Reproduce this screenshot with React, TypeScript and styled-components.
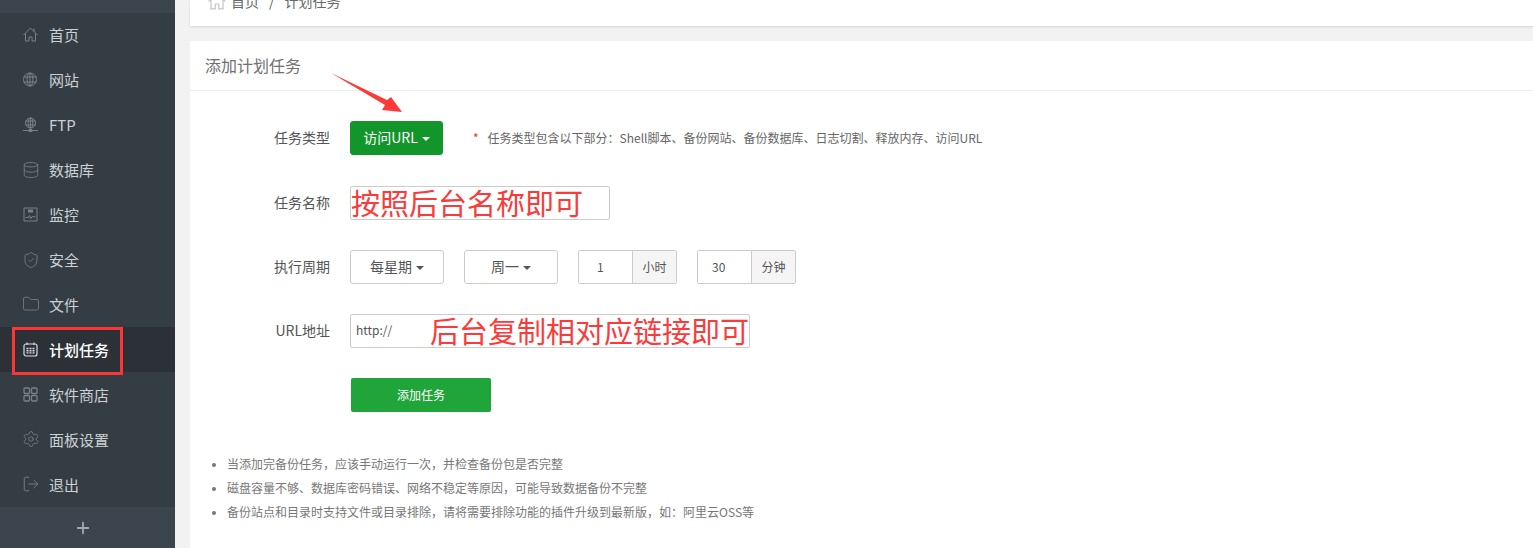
import React from 'react';
import styled, { createGlobalStyle } from 'styled-components';
import { Database, Folder, LogOut, Plus, Settings, ShieldCheck } from 'lucide-react';

const GlobalStyle = createGlobalStyle`
  html, body {
    margin: 0;
    padding: 0;
    background: #f0f0f0;
    font-family: "Noto Sans CJK SC", "Liberation Sans", sans-serif;
  }
`;

const Page = styled.div`
  position: relative;
  display: flex;
  width: 1533px;
  height: 548px;
  overflow: hidden;
`;

const Sidebar = styled.aside`
  display: flex;
  flex-direction: column;
  flex: 0 0 175px;
  background: #353d44;
`;

const SideTop = styled.div`
  height: 13px;
  background: #3c444d;
`;

const MenuItem = styled.div<{ $active?: boolean }>`
  display: flex;
  align-items: center;
  gap: 11px;
  box-sizing: border-box;
  height: 45px;
  padding: 0 0 1px 23px;
  font-size: 15px;
  color: ${(p) => (p.$active ? '#ffffff' : '#ccd0d3')};
  font-weight: ${(p) => (p.$active ? 500 : 400)};
  background: ${(p) => (p.$active ? '#2c3138' : 'transparent')};

  svg {
    flex: 0 0 15px;
    width: 15px;
    height: 15px;
    color: ${(p) => (p.$active ? '#d9dbdd' : '#7b8186')};
  }

  svg.lucide {
    flex: 0 0 18px;
    width: 18px;
    height: 18px;
    margin: 0 -1.5px;
  }
`;

const SideAdd = styled.div`
  display: flex;
  align-items: center;
  justify-content: center;
  height: 41px;
  margin-top: auto;
  padding-right: 10px;
  background: #3c444d;
  color: #a4a9ad;
`;

const Main = styled.main`
  flex: 1;
  padding-left: 15px;
  background: #f2f2f2;
`;

const Crumbs = styled.div`
  display: flex;
  align-items: center;
  gap: 10px;
  height: 26px;
  padding-left: 18px;
  overflow: hidden;
  background: #fff;
  box-shadow: 0 1px 2px rgba(0, 0, 0, 0.12);
  font-size: 14px;
  line-height: 20px;
  color: #666;

  > * {
    position: relative;
    top: -12px;
  }
`;

const CrumbHome = styled.span`
  display: flex;
  margin-right: -5px;
  color: #c4c4c4;

  svg {
    width: 18px;
    height: 18px;
  }
`;

const Card = styled.section`
  height: 507px;
  margin-top: 15px;
  background: #fff;
`;

const CardTitle = styled.h2`
  height: 49px;
  margin: 0;
  padding-left: 15px;
  border-bottom: 1px solid #eeeeee;
  box-sizing: content-box;
  font-size: 16px;
  font-weight: 400;
  line-height: 48px;
  color: #707070;
`;

const Form = styled.div`
  display: flex;
  flex-direction: column;
  gap: 30px;
  padding-top: 30px;
`;

const Row = styled.div`
  display: flex;
  align-items: center;
  height: 34px;

  &:first-child {
    margin-bottom: 1px;
  }
`;

const Label = styled.label`
  flex: 0 0 140px;
  margin-right: 20px;
  padding-bottom: 2px;
  text-align: right;
  font-size: 14px;
  color: #555;
`;

const Controls = styled.div`
  display: flex;
  gap: 20px;
`;

const Caret = styled.i`
  display: inline-block;
  margin-left: 4px;
  border-top: 4px solid currentColor;
  border-left: 4px solid transparent;
  border-right: 4px solid transparent;
  vertical-align: middle;
`;

const GreenSelect = styled.button`
  width: 93px;
  height: 34px;
  padding: 0 0 2px;
  border: 1px solid #12962c;
  border-radius: 3px;
  background: #12962c;
  color: #fff;
  font: inherit;
  font-size: 14px;
`;

const Hint = styled.span`
  margin-left: 30px;
  padding-bottom: 2px;
  font-size: 12px;
  color: #666;
`;

const Star = styled.span`
  margin-right: 9px;
  color: #e33;
`;

const TextBox = styled.div<{ $width: number }>`
  position: relative;
  box-sizing: border-box;
  width: ${(p) => p.$width}px;
  height: 34px;
  padding-left: 5px;
  border: 1px solid #ccc;
  border-radius: 2px;
  background: #fff;
  font-size: 12px;
  line-height: 30px;
  color: #555;
`;

const Annotation = styled.span<{ $left: number }>`
  position: absolute;
  top: -3px;
  left: ${(p) => p.$left}px;
  font-size: 29px;
  line-height: 36px;
  white-space: nowrap;
  color: #fb3a3a;
`;

const SelectButton = styled.button`
  box-sizing: border-box;
  width: 94px;
  height: 34px;
  padding: 0 0 2px;
  border: 1px solid #ccc;
  border-radius: 3px;
  background: #fff;
  font: inherit;
  font-size: 14px;
  color: #555;
`;

const Group = styled.div`
  display: flex;
  box-sizing: border-box;
  width: 99px;
  height: 34px;
  border: 1px solid #ccc;
  border-radius: 2px;
  font-size: 12px;
  line-height: 31px;
  color: #555;
`;

const GroupValue = styled.span<{ $pad: number }>`
  flex: 0 0 53px;
  padding-left: ${(p) => p.$pad}px;
  box-sizing: border-box;
  background: #fff;
`;

const GroupUnit = styled.span`
  flex: 1;
  border-left: 1px solid #ccc;
  background: #f5f5f5;
  text-align: center;
`;

const SubmitRow = styled.div`
  padding-left: 161px;
`;

const Submit = styled.button`
  width: 140px;
  height: 34px;
  padding: 0 0 2px;
  border: 0;
  border-radius: 2px;
  background: #20a53a;
  color: #fff;
  font: inherit;
  font-size: 12px;
`;

const Notes = styled.ul`
  margin: 40px 0 0;
  padding-left: 37px;
  font-size: 12px;
  line-height: 24px;
  color: #777;

  li::marker {
    font-size: 11px;
  }
`;

const RedFrame = styled.div`
  position: absolute;
  left: 12px;
  top: 327px;
  width: 111px;
  height: 48px;
  box-sizing: border-box;
  border: 3px solid #fc3535;
`;

const ArrowMark = styled.svg`
  position: absolute;
  left: 0;
  top: 0;
`;

const HomeIcon = () => (
  <svg viewBox="0 0 15 15" fill="none" stroke="currentColor" strokeWidth="1">
    <path d="M.5 8 7.5 1l7 7" />
    <path d="M2.5 6.5V14H6v-4h3v4h3.5V6.5" />
    <path d="M11 1.5v3" />
  </svg>
);

const GlobeIcon = () => (
  <svg viewBox="0 0 15 15" fill="none" stroke="currentColor" strokeWidth="1">
    <circle cx="7" cy="7.5" r="6.5" />
    <ellipse cx="7" cy="7.5" rx="3" ry="6.5" />
    <path d="M.5 5h13M.5 10h13M7 1v13" />
  </svg>
);

const FtpIcon = () => (
  <svg viewBox="0 0 15 15" fill="none" stroke="currentColor" strokeWidth="1">
    <circle cx="7.5" cy="6" r="5" />
    <ellipse cx="7.5" cy="6" rx="2.3" ry="5" />
    <path d="M2.5 4h10M2.5 8h10M7.5 1v10M0 13.5h15" />
    <path d="M6 12.5h3v2H6z" fill="currentColor" />
  </svg>
);

const MonitorIcon = () => (
  <svg viewBox="0 0 15 15" fill="none" stroke="currentColor" strokeWidth="1">
    <path d="M1 1h13v13H1z" />
    <path d="M5 2.5h5v3H5z" fill="currentColor" stroke="none" />
    <path d="M2.5 10.5h3l1-2 1.3 3.2 1.2-2h3.5" />
  </svg>
);

const CalendarIcon = () => (
  <svg viewBox="0 0 15 15" fill="none" stroke="currentColor" strokeWidth="1.2">
    <rect x="1" y="2" width="13" height="12" rx="2" />
    <path d="M4 .5v2.5M11 .5v2.5" />
    <path d="M3.5 6.5h8M3.5 8.7h8M3.5 10.9h8" strokeWidth="1.4" strokeDasharray="2 1" />
  </svg>
);

const GridIcon = () => (
  <svg viewBox="0 0 15 15" fill="none" stroke="currentColor" strokeWidth="1.3">
    <rect x="1" y="1" width="5.5" height="5.5" rx="1" />
    <rect x="8.5" y="1" width="5.5" height="5.5" rx="1" />
    <rect x="1" y="8.5" width="5.5" height="5.5" rx="1" />
    <rect x="8.5" y="8.5" width="5.5" height="5.5" rx="1" />
  </svg>
);

const menu: { label: string; icon: React.ReactNode; active?: boolean }[] = [
  { label: '首页', icon: <HomeIcon /> },
  { label: '网站', icon: <GlobeIcon /> },
  { label: 'FTP', icon: <FtpIcon /> },
  { label: '数据库', icon: <Database strokeWidth={1.1} /> },
  { label: '监控', icon: <MonitorIcon /> },
  { label: '安全', icon: <ShieldCheck strokeWidth={1.1} /> },
  { label: '文件', icon: <Folder strokeWidth={1.1} /> },
  { label: '计划任务', icon: <CalendarIcon />, active: true },
  { label: '软件商店', icon: <GridIcon /> },
  { label: '面板设置', icon: <Settings strokeWidth={1.1} /> },
  { label: '退出', icon: <LogOut strokeWidth={1.2} /> },
];

export default function App() {
  return (
    <Page>
      <GlobalStyle />
      <Sidebar>
        <SideTop />
        {menu.map((item) => (
          <MenuItem key={item.label} $active={item.active}>
            {item.icon}
            {item.label}
          </MenuItem>
        ))}
        <SideAdd>
          <Plus size={18} strokeWidth={2.4} />
        </SideAdd>
      </Sidebar>

      <Main>
        <Crumbs>
          <CrumbHome>
            <HomeIcon />
          </CrumbHome>
          <span>首页</span>
          <span>/</span>
          <span>计划任务</span>
        </Crumbs>

        <Card>
          <CardTitle>添加计划任务</CardTitle>
          <Form>
            <Row>
              <Label>任务类型</Label>
              <GreenSelect>
                访问URL
                <Caret />
              </GreenSelect>
              <Hint>
                <Star>*</Star>
                任务类型包含以下部分：Shell脚本、备份网站、备份数据库、日志切割、释放内存、访问URL
              </Hint>
            </Row>
            <Row>
              <Label>任务名称</Label>
              <TextBox $width={260}>
                <Annotation $left={0}>按照后台名称即可</Annotation>
              </TextBox>
            </Row>
            <Row>
              <Label>执行周期</Label>
              <Controls>
                <SelectButton>
                  每星期
                  <Caret />
                </SelectButton>
                <SelectButton>
                  周一
                  <Caret />
                </SelectButton>
                <Group>
                  <GroupValue $pad={18}>1</GroupValue>
                  <GroupUnit>小时</GroupUnit>
                </Group>
                <Group>
                  <GroupValue $pad={14}>30</GroupValue>
                  <GroupUnit>分钟</GroupUnit>
                </Group>
              </Controls>
            </Row>
            <Row>
              <Label>URL地址</Label>
              <TextBox $width={400}>
                http://
                <Annotation $left={79}>后台复制相对应链接即可</Annotation>
              </TextBox>
            </Row>
            <SubmitRow>
              <Submit>添加任务</Submit>
            </SubmitRow>
          </Form>
          <Notes>
            <li>当添加完备份任务，应该手动运行一次，并检查备份包是否完整</li>
            <li>磁盘容量不够、数据库密码错误、网络不稳定等原因，可能导致数据备份不完整</li>
            <li>备份站点和目录时支持文件或目录排除，请将需要排除功能的插件升级到最新版，如：阿里云OSS等</li>
          </Notes>
        </Card>
      </Main>

      <RedFrame />
      <ArrowMark width="1533" height="548">
        <polygon points="331,73 387,100 391,97 402,112 382,110 385,105" fill="#fc3a3a" />
      </ArrowMark>
    </Page>
  );
}
